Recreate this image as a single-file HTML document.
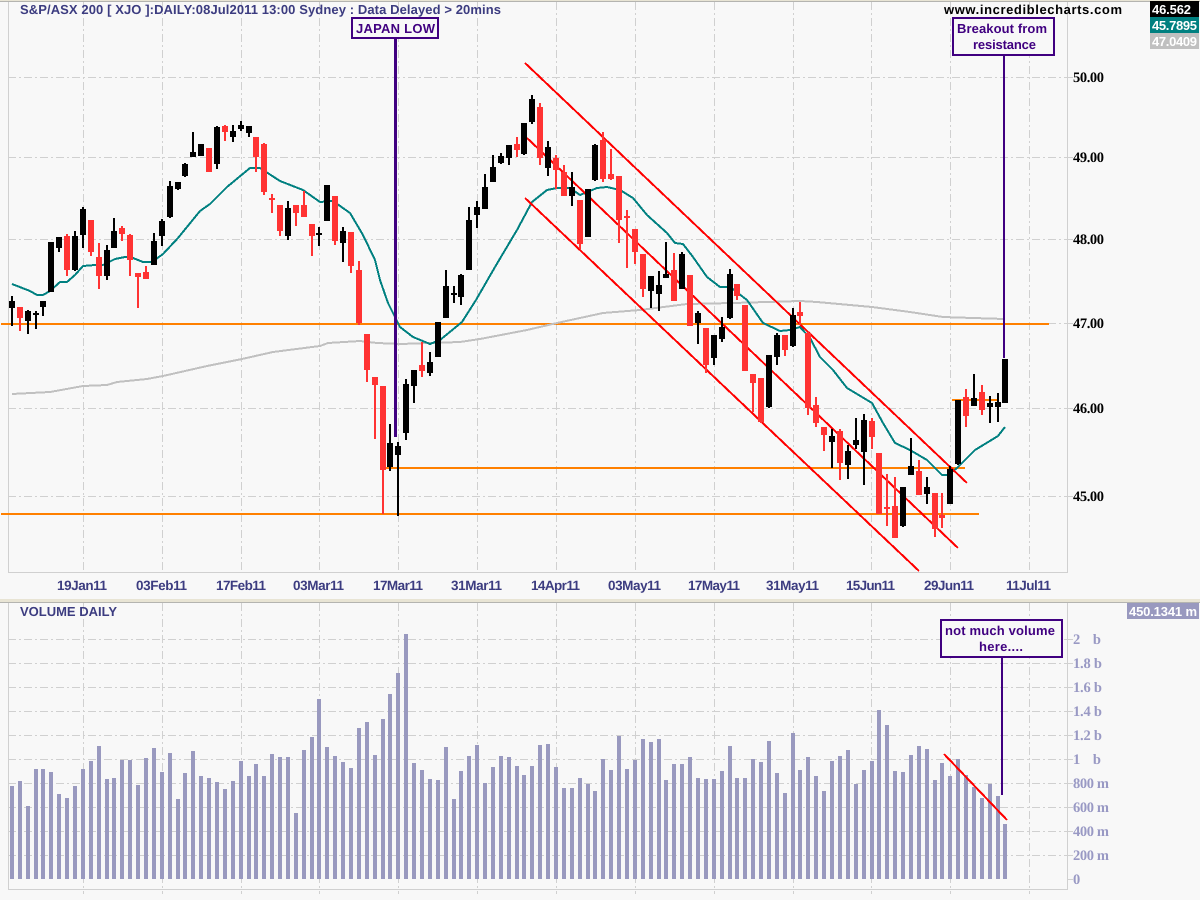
<!DOCTYPE html>
<html><head><meta charset="utf-8"><title>S&amp;P/ASX 200 XJO Daily</title>
<style>
html,body{margin:0;padding:0;background:#f8f8f8;width:1200px;height:900px;overflow:hidden}
svg{display:block}
.ss{font-family:"Liberation Sans",sans-serif;font-weight:bold}
.se{font-family:"Liberation Serif",serif;font-weight:bold}
</style></head><body>
<svg width="1200" height="900" viewBox="0 0 1200 900" xmlns="http://www.w3.org/2000/svg" shape-rendering="crispEdges">
<rect width="1200" height="900" fill="#f8f8f8"/>
<!-- top bands -->
<rect x="0" y="0" width="1200" height="1" fill="#e8e4d4"/><rect x="0" y="1" width="1200" height="1" fill="#b4b4b0"/>
<rect x="0" y="599" width="1200" height="3" fill="#e8e4d4"/><rect x="0" y="602" width="1200" height="1" fill="#b4b4b0"/>
<!-- grid -->
<g stroke="#d0d0d0" stroke-width="1" fill="none">
<path d="M8.5 2V572.5H1067.5V2M8.5 603V889.5H1067.5V603"/>
<path stroke-dasharray="8 3 2 3" d="M83.5 2V572M162.5 2V572M241.5 2V572M319.5 2V572M398.5 2V572M477.5 2V572M556.5 2V572M635.5 2V572M714.5 2V572M793.5 2V572M871.5 2V572M950.5 2V572M1029.5 2V572"/>
<path stroke-dasharray="8 3 2 3" d="M83.5 603V894M162.5 603V894M241.5 603V894M319.5 603V894M398.5 603V894M477.5 603V894M556.5 603V894M635.5 603V894M714.5 603V894M793.5 603V894M871.5 603V894M950.5 603V894M1029.5 603V894"/>
<path stroke-dasharray="8 3 2 3" d="M8 77.5H1067M8 157.5H1067M8 239.5H1067M8 323.5H1067M8 408.5H1067M8 496.5H1067M8 639.5H1067M8 663.5H1067M8 687.5H1067M8 711.5H1067M8 735.5H1067M8 759.5H1067M8 783.5H1067M8 807.5H1067M8 831.5H1067M8 855.5H1067"/>
<path d="M1067 77.5H1073M1067 157.5H1073M1067 239.5H1073M1067 323.5H1073M1067 408.5H1073M1067 496.5H1073M1067 639.5H1073M1067 663.5H1073M1067 687.5H1073M1067 711.5H1073M1067 735.5H1073M1067 759.5H1073M1067 783.5H1073M1067 807.5H1073M1067 831.5H1073M1067 855.5H1073M1067 879.5H1073"/>
</g>
<!-- volume bars -->
<path fill="none" stroke="#9999bf" stroke-width="4" d="M12 786V879M20 781V879M28 806V879M36 769V879M43 769V879M51 772V879M59 794V879M67 798V879M75 786V879M83 769V879M91 761V879M99 746V879M107 779V879M114 778V879M122 760V879M130 760V879M138 785V879M146 758V879M154 748V879M162 772V879M170 753V879M178 799V879M185 773V879M193 751V879M201 776V879M209 778V879M217 782V879M225 789V879M233 781V879M241 761V879M249 776V879M256 764V879M264 776V879M272 754V879M280 757V879M288 757V879M296 813V879M304 750V879M312 737V879M319 699V879M327 747V879M335 756V879M343 762V879M351 768V879M359 728V879M367 722V879M375 755V879M383 719V879M390 694V879M398 673V879M406 634V879M414 763V879M422 770V879M430 779V879M438 780V879M446 747V879M454 799V879M461 771V879M469 756V879M477 745V879M485 783V879M493 767V879M501 756V879M509 757V879M517 766V879M524 775V879M532 766V879M540 745V879M548 744V879M556 767V879M564 788V879M572 788V879M580 778V879M588 784V879M595 791V879M603 759V879M611 770V879M619 736V879M627 769V879M635 760V879M643 739V879M651 742V879M659 739V879M666 780V879M674 764V879M682 764V879M690 757V879M698 778V879M706 779V879M714 779V879M722 771V879M730 746V879M737 778V879M745 778V879M753 759V879M761 762V879M769 741V879M777 773V879M785 793V879M793 733V879M800 770V879M808 757V879M816 776V879M824 791V879M832 761V879M840 756V879M848 750V879M856 784V879M864 770V879M872 761V879M879 710V879M887 725V879M895 771V879M903 772V879M911 755V879M919 746V879M927 749V879M935 780V879M942 763V879M950 776V879M958 759V879M966 775V879M974 787V879M982 798V879M990 784V879M998 796V879M1005 824V879"/>
<path fill="none" stroke="#ff0000" stroke-width="2" d="M944 754L1007 820"/>
<!-- price overlays -->
<path fill="none" stroke="#ff8000" stroke-width="2" d="M1 324H1049M381 468H965M1 514H979M952 400H997"/>
<path fill="none" stroke="#c0c0c0" stroke-width="2" d="M12 394L50 392 83 386 107 385 117 382 147 379 163 376 207 366 242 359 273 352 320 346 328 343 360 341 377 343 400 344 460 342 480 339 527 330 557 323 603 313 640 310 687 304 733 303 800 301 817 302 872 307 910 312 943 317 973 318 1005 319"/>
<path fill="none" stroke="#008080" stroke-width="2" d="M12 284L30 291 37 295 43 295 50 291 60 282 67 282 75 275 83 266 95 265 103 265 115 259 125 257 133 258 143 262 152 262 163 254 178 238 200 211 210 204 227 187 250 168 260 168 280 181 303 190 320 202 333 201 350 213 363 235 375 260 380 280 388 303 400 327 413 337 430 344 440 340 462 322 476 300 495 267 517 230 532 202 547 190 557 188 570 188 580 195 597 188 607 187 620 190 633 198 647 215 667 233 675 243 683 244 693 257 707 277 720 287 730 287 747 300 763 323 780 331 790 330 800 327 810 338 820 357 833 370 847 388 872 403 883 423 895 443 910 450 927 460 942 475 948 475 957 468 975 450 998 436 1005 427"/>
<path fill="none" stroke="#ff0000" stroke-width="2" d="M525 63L967 483M527 138L958 548M525 198L919 571"/>
<!-- red candles -->
<path fill="none" stroke="#ff3333" stroke-width="2" d="M20 307V331M67 234V276M91 220V256M99 243V289M122 226V241M130 234V276M138 273V308M146 266V279M209 148V172M225 125V141M256 137V172M264 143V195M272 194V213M280 205V236M296 205V226M304 191V217M312 224V256M335 196V245M351 232V273M359 261V325M367 334V382M375 377V439M383 386V514M422 342V377M517 137V157M540 103V165M556 155V189M564 165V196M580 200V249M603 132V182M611 149V180M619 176V243M627 210V268M635 229V264M643 254V297M674 253V301M690 275V326M706 328V373M737 284V300M745 305V371M753 374V412M761 378V423M785 335V356M800 302V325M808 332V415M816 397V427M824 427V451M840 429V480M872 418V449M879 453V514M887 474V526M895 477V538M919 460V495M935 493V537M942 493V528M966 389V427M982 385V415"/>
<path fill="none" stroke="#ff3333" stroke-width="6" d="M20 307V318M67 236V270M91 220V252M99 257V276M122 228V234M130 235V260M138 273V277M146 272V279M209 148V172M225 126V132M256 137V157M264 144V192M272 198V200M280 205V231M296 205V213M304 205V217M312 224V236M335 196V241M351 232V266M359 270V323M367 334V370M375 377V385M383 386V470M422 365V371M517 144V150M540 107V158M556 158V170M564 172V196M580 200V244M603 140V179M611 174V179M619 176V220M627 216V218M635 229V252M643 254V289M674 270V301M690 275V326M706 328V365M737 284V296M745 305V371M753 374V383M761 378V422M785 335V350M800 312V316M808 333V408M816 405V423M824 427V435M840 431V463M872 421V437M879 453V514M887 507V509M895 506V538M919 471V495M935 493V529M942 515V518M966 397V416M982 392V410"/>
<!-- black candles -->
<path fill="none" stroke="#000" stroke-width="2" d="M12 296V326M28 310V334M36 311V329M43 301V316M51 242V292M59 237V252M75 231V271M83 207V248M107 245V280M114 218V248M154 233V265M162 219V246M170 181V218M178 182V190M185 163V177M193 132V157M201 144V156M217 126V169M233 125V142M241 121V131M249 126V137M288 201V240M319 227V246M327 185V221M343 227V262M390 424V471M398 442V516M406 379V440M414 370V403M430 352V376M438 322V357M446 270V318M454 286V303M461 274V305M469 207V270M477 201V228M485 174V209M493 155V182M501 153V164M509 145V165M524 123V155M532 95V124M548 141V176M572 172V206M588 189V237M595 144V181M651 276V308M659 271V311M666 242V278M682 252V289M698 311V344M714 335V365M722 317V342M730 269V319M769 355V408M777 333V365M793 308V347M832 429V468M848 445V479M856 418V449M864 414V485M903 487V527M911 438V475M927 477V504M950 466V504M958 400V465M974 374V406M990 396V423M998 393V422M1005 359V403"/>
<path fill="none" stroke="#000" stroke-width="6" d="M12 301V308M28 311V321M36 313V315M43 301V307M51 242V292M59 237V248M75 236V270M83 209V235M107 250V276M114 231V248M154 241V265M162 221V236M170 186V217M178 182V189M185 164V176M193 152V157M201 144V156M217 127V164M233 131V137M241 125V129M249 126V133M288 208V236M319 233V235M327 185V221M343 231V243M390 443V467M398 446V455M406 384V433M414 370V386M430 362V373M438 322V357M446 286V318M454 293V295M461 275V297M469 220V270M477 207V215M485 187V209M493 167V182M501 156V163M509 145V158M524 123V154M532 99V122M548 147V168M572 187V196M588 189V237M595 145V180M651 276V291M659 285V294M666 274V278M682 254V289M698 313V323M714 335V358M722 327V339M730 274V318M769 355V407M777 335V357M793 315V346M832 436V442M848 451V465M856 440V445M864 420V452M903 487V526M911 466V475M927 487V494M950 469V504M958 400V464M974 398V406M990 403V407M998 402V407M1005 359V403"/>
<!-- annotation lines -->
<path fill="none" stroke="#400080" stroke-width="3" d="M395.5 38V437"/>
<path fill="none" stroke="#400080" stroke-width="2" d="M1004 55V358M1002 657V795"/>
<g fill="#f8f8f8" stroke="#400080" stroke-width="2">
<rect x="352" y="18" width="86" height="20"/>
<rect x="953" y="18" width="101" height="37"/>
<rect x="941" y="620" width="121" height="37"/>
</g>
<g shape-rendering="auto" text-rendering="geometricPrecision">
<g class="ss" font-size="13" fill="#400080">
<text x="356" y="33" textLength="79" lengthAdjust="spacing">JAPAN LOW</text>
<text x="957" y="33" textLength="90" lengthAdjust="spacing">Breakout from</text>
<text x="973" y="49" textLength="63" lengthAdjust="spacing">resistance</text>
<text x="945" y="635" textLength="110" lengthAdjust="spacing">not much volume</text>
<text x="979" y="651" textLength="44" lengthAdjust="spacing">here....</text>
</g>
<text class="ss" x="20" y="14" font-size="13" fill="#3c3c80" textLength="481" lengthAdjust="spacing">S&amp;P/ASX 200 [ XJO ]:DAILY:08Jul2011 13:00 Sydney : Data Delayed &gt; 20mins</text>
<text class="ss" x="944" y="14" font-size="13" fill="#000" textLength="178" lengthAdjust="spacing">www.incrediblecharts.com</text>
<text class="ss" x="20" y="616" font-size="13" fill="#3c3c80" textLength="97" lengthAdjust="spacing">VOLUME DAILY</text>
<g class="ss" font-size="13.5" fill="#3c3c80">
<text x="57" y="590" textLength="50" lengthAdjust="spacing">19Jan11</text>
<text x="136" y="590" textLength="51" lengthAdjust="spacing">03Feb11</text>
<text x="216" y="590" textLength="50" lengthAdjust="spacing">17Feb11</text>
<text x="293" y="590" textLength="51" lengthAdjust="spacing">03Mar11</text>
<text x="373" y="590" textLength="50" lengthAdjust="spacing">17Mar11</text>
<text x="451" y="590" textLength="51" lengthAdjust="spacing">31Mar11</text>
<text x="531" y="590" textLength="49" lengthAdjust="spacing">14Apr11</text>
<text x="608" y="590" textLength="53" lengthAdjust="spacing">03May11</text>
<text x="688" y="590" textLength="52" lengthAdjust="spacing">17May11</text>
<text x="766" y="590" textLength="53" lengthAdjust="spacing">31May11</text>
<text x="846" y="590" textLength="49" lengthAdjust="spacing">15Jun11</text>
<text x="924" y="590" textLength="50" lengthAdjust="spacing">29Jun11</text>
<text x="1006" y="590" textLength="45" lengthAdjust="spacing">11Jul11</text>
</g>
<g class="se" font-size="14.5" fill="#000">
<text x="1073" y="82" textLength="31">50.00</text>
<text x="1073" y="162" textLength="31">49.00</text>
<text x="1073" y="244" textLength="31">48.00</text>
<text x="1073" y="328" textLength="31">47.00</text>
<text x="1073" y="413" textLength="31">46.00</text>
<text x="1073" y="501" textLength="31">45.00</text>
</g>
<g class="se" font-size="14.5" fill="#9999c4">
<text x="1073" y="644" textLength="28">2 b</text>
<text x="1073" y="668" textLength="29">1.8 b</text>
<text x="1073" y="692" textLength="29">1.6 b</text>
<text x="1073" y="716" textLength="29">1.4 b</text>
<text x="1073" y="740" textLength="29">1.2 b</text>
<text x="1073" y="764" textLength="28">1 b</text>
<text x="1073" y="788" textLength="36">800 m</text>
<text x="1073" y="812" textLength="36">600 m</text>
<text x="1073" y="836" textLength="36">400 m</text>
<text x="1073" y="860" textLength="36">200 m</text>
<text x="1073" y="884">0</text>
</g>
</g>
<!-- value tags -->
<rect x="1150" y="1" width="49" height="16" fill="#000"/>
<rect x="1150" y="17" width="49" height="16" fill="#008080"/>
<rect x="1150" y="33" width="49" height="16" fill="#c0c0c0"/>
<rect x="1127" y="603" width="72" height="16" fill="#9999bf"/>
<g class="ss" font-size="13" fill="#fff" shape-rendering="auto">
<text x="1152" y="14" textLength="39" lengthAdjust="spacing">46.562</text>
<text x="1152" y="30" textLength="45" lengthAdjust="spacing">45.7895</text>
<text x="1152" y="46" textLength="45" lengthAdjust="spacing">47.0409</text>
<text x="1129" y="616" textLength="68" lengthAdjust="spacing">450.1341 m</text>
</g>
</svg>
</body></html>
